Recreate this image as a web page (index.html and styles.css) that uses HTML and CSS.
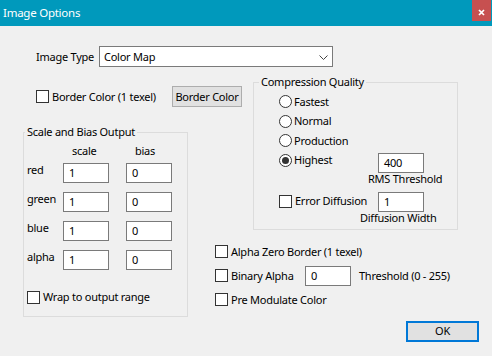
FILE: index.html
```html
<!DOCTYPE html>
<html>
<head>
<meta charset="utf-8">
<title>Image Options</title>
<link rel="stylesheet" href="styles.css">
</head>
<body>
<div class="window">
  <div class="titlebar">
    <span class="title">Image Options</span>
    <span class="close"><svg width="7" height="7" viewBox="0 0 7 7"><path d="M1 1L6 6M6 1L1 6" stroke="#fff" stroke-width="1.7" fill="none"/></svg></span>
  </div>
  <div class="content">
    <div class="type-row">
      <span class="type-label">Image Type</span>
      <div class="combo">
        <span>Color Map</span>
        <svg class="chev" width="9" height="5" viewBox="0 0 9 5"><path d="M0.5 0.5L4.5 4.5L8.5 0.5" stroke="#444" stroke-width="1" fill="none"/></svg>
      </div>
    </div>
    <div class="middle">
      <div class="left-col">
        <div class="border-row">
          <div class="check"><span class="box"></span><span>Border Color (1 texel)</span></div>
          <button class="btn border-btn">Border Color</button>
        </div>
        <fieldset class="group scale-group">
          <legend>Scale and Bias Output</legend>
          <div class="scale-body">
            <div class="sb-head"><span></span><span>scale</span><span>bias</span></div>
            <div class="sb-grid">
              <span class="sb-label">red</span><span class="field">1</span><span class="field">0</span>
              <span class="sb-label">green</span><span class="field">1</span><span class="field">0</span>
              <span class="sb-label">blue</span><span class="field">1</span><span class="field">0</span>
              <span class="sb-label">alpha</span><span class="field">1</span><span class="field">0</span>
            </div>
            <div class="check wrap-row"><span class="box"></span><span>Wrap to output range</span></div>
          </div>
        </fieldset>
      </div>
      <div class="right-col">
        <fieldset class="group comp-group">
          <legend>Compression Quality</legend>
          <div class="comp-body">
            <div class="radio-row"><span class="radio"></span><span>Fastest</span></div>
            <div class="radio-row"><span class="radio"></span><span>Normal</span></div>
            <div class="radio-row"><span class="radio"></span><span>Production</span></div>
            <div class="param-row">
              <div class="radio-row param-left"><span class="radio checked"></span><span>Highest</span></div>
              <div class="param">
                <span class="field">400</span>
                <span class="caption rms">RMS Threshold</span>
              </div>
            </div>
            <div class="param-row diff-row">
              <div class="check param-left"><span class="box"></span><span>Error Diffusion</span></div>
              <div class="param">
                <span class="field">1</span>
                <span class="caption dw">Diffusion Width</span>
              </div>
            </div>
          </div>
        </fieldset>
        <div class="extras">
          <div class="check extra-row"><span class="box"></span><span>Alpha Zero Border (1 texel)</span></div>
          <div class="extra-row binary-row">
            <div class="check binary-check"><span class="box"></span><span>Binary Alpha</span></div>
            <span class="field">0</span>
            <span class="threshold">Threshold (0 - 255)</span>
          </div>
          <div class="check extra-row"><span class="box"></span><span>Pre Modulate Color</span></div>
        </div>
        <button class="btn ok-btn">OK</button>
      </div>
    </div>
  </div>
</div>
</body>
</html>
```
FILE: styles.css
```css
* { box-sizing: border-box; }

html, body {
  margin: 0;
  padding: 0;
}

body {
  width: 492px;
  height: 356px;
  overflow: hidden;
  background: #f0f0f0;
  font-family: "Noto Sans", "Open Sans", sans-serif;
  font-size: 11px;
  letter-spacing: -0.25px;
  line-height: 16px;
  color: #000;
}

.window {
  width: 492px;
  height: 356px;
  background: #f0f0f0;
}

.titlebar {
  height: 26px;
  background: #0099bc;
  display: flex;
  justify-content: space-between;
  align-items: flex-start;
}

.title {
  color: #fff;
  font-size: 11.5px;
  line-height: 26px;
  padding-left: 3px;
}

.close {
  width: 19px;
  height: 21px;
  margin-right: 1px;
  background: #c75050;
  display: flex;
  align-items: center;
  justify-content: center;
  padding-top: 3px;
}

.content {
  padding-top: 20px;
}

.type-row {
  display: flex;
  align-items: center;
  margin-left: 36px;
  height: 21px;
}

.type-label {
  width: 63px;
}

.combo {
  width: 234px;
  height: 21px;
  background: #fff;
  border: 1px solid #7a7a7a;
  display: flex;
  align-items: center;
  justify-content: space-between;
  padding: 0 4px 0 4px;
}

.chev {
  display: block;
  margin-top: 1px;
}

.middle {
  display: flex;
  align-items: flex-start;
  margin-top: 7px;
  padding-left: 23px;
}

.left-col {
  width: 230px;
}

.border-row {
  display: flex;
  align-items: center;
  margin-top: 12px;
  margin-left: 13px;
  width: 206px;
  height: 21px;
}

.btn {
  font: inherit;
  letter-spacing: inherit;
  color: #000;
  background: #e1e1e1;
  border: 1px solid #adadad;
  padding: 0;
  margin: 0;
}

.border-btn {
  margin-left: auto;
  width: 70px;
  height: 21px;
}

.check {
  display: flex;
  align-items: center;
  gap: 3px;
}

.box {
  width: 13px;
  height: 13px;
  flex: none;
  background: #fff;
  border: 1px solid #333;
}

.radio {
  width: 13px;
  height: 13px;
  flex: none;
  background: #fff;
  border: 1px solid #333;
  border-radius: 50%;
  display: flex;
  align-items: center;
  justify-content: center;
}

.radio.checked::after {
  content: "";
  width: 7px;
  height: 7px;
  border-radius: 50%;
  background: #333;
}

.group {
  margin: 0;
  padding: 0;
  border: 1px solid #dcdcdc;
  min-width: 0;
}

.group legend {
  padding: 0 2px;
  line-height: 16px;
}

.scale-group {
  margin-top: 17px;
  width: 165px;
}

.scale-group legend {
  margin-left: 1px;
}

.scale-body {
  padding: 3px 0 11px 3px;
}

.sb-head,
.sb-grid {
  display: grid;
  grid-template-columns: 36px 63px 46px;
}

.sb-head {
  height: 16px;
  margin-bottom: 4px;
}

.sb-head span {
  padding-left: 9px;
}

.sb-grid {
  grid-auto-rows: 20px;
  row-gap: 9px;
}

.sb-label {
  align-self: start;
  margin-top: -1px;
}

.field {
  display: flex;
  align-items: center;
  width: 46px;
  height: 20px;
  background: #fff;
  border: 1px solid #7a7a7a;
  padding-left: 5px;
}

.wrap-row {
  margin-top: 19px;
  height: 16px;
}

.right-col {
  width: 239px;
}

.comp-group {
  width: 205px;
}

.comp-group legend {
  margin-left: 5px;
}

.comp-body {
  padding: 2px 0 3px 25px;
}

.radio-row {
  display: flex;
  align-items: center;
  gap: 2px;
  height: 19.5px;
}

.param-row {
  display: flex;
  align-items: flex-start;
}

.param-left {
  width: 99px;
  height: 19.5px;
}

.diff-row {
  margin-top: 3px;
}

.diff-row .param-left {
  margin-top: 2px;
}

.param {
  display: flex;
  flex-direction: column;
  padding-top: 2px;
}

.caption {
  margin-top: -2px;
  white-space: nowrap;
}

.caption.rms {
  margin-left: -10px;
}

.caption.dw {
  margin-left: -18px;
}

.extras {
  margin-left: -38px;
  margin-top: 10px;
}

.extra-row {
  height: 24px;
  display: flex;
  align-items: center;
}

.binary-check {
  width: 90px;
}

.threshold {
  margin-left: 8px;
}

.ok-btn {
  display: block;
  margin-top: 9px;
  margin-left: 153px;
  width: 73px;
  height: 21px;
  border: 2px solid #0078d7;
}
```
